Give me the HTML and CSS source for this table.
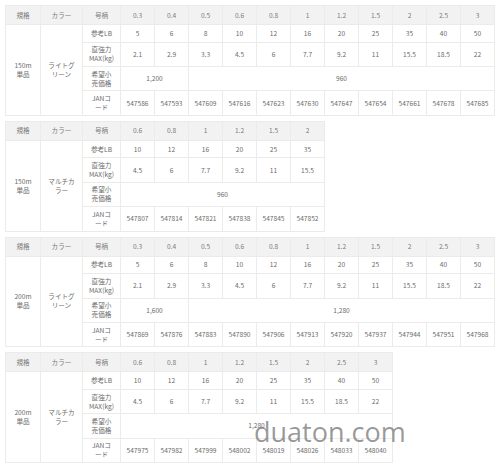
FILE: index.html
```html
<!DOCTYPE html>
<html lang="ja">
<head>
<meta charset="utf-8">
<link rel="stylesheet" href="styles.css">
</head>
<body>
<div class="page">
  <table class="spec w11">
    <colgroup><col class="c-spec"><col class="c-color"><col class="c-label"><col span="11" class="c-val"></colgroup>
    <tr class="head"><th>規格</th><th>カラー</th><th>号柄</th><th>0.3</th><th>0.4</th><th>0.5</th><th>0.6</th><th>0.8</th><th>1</th><th>1.2</th><th>1.5</th><th>2</th><th>2.5</th><th>3</th></tr>
    <tr class="r-lb"><td rowspan="4">150m<br>単品</td><td rowspan="4">ライトグ<br>リーン</td><td>参考LB</td><td>5</td><td>6</td><td>8</td><td>10</td><td>12</td><td>16</td><td>20</td><td>25</td><td>35</td><td>40</td><td>50</td></tr>
    <tr class="r-tall"><td>直強力<br>MAX(kg)</td><td>2.1</td><td>2.9</td><td>3.3</td><td>4.5</td><td>6</td><td>7.7</td><td>9.2</td><td>11</td><td>15.5</td><td>18.5</td><td>22</td></tr>
    <tr class="r-tall"><td>希望小<br>売価格</td><td colspan="2">1,200</td><td colspan="9">960</td></tr>
    <tr class="r-tall"><td>JANコ<br>ード</td><td>547586</td><td>547593</td><td>547609</td><td>547616</td><td>547623</td><td>547630</td><td>547647</td><td>547654</td><td>547661</td><td>547678</td><td>547685</td></tr>
  </table>

  <table class="spec w6">
    <colgroup><col class="c-spec"><col class="c-color"><col class="c-label"><col span="6" class="c-val"></colgroup>
    <tr class="head"><th>規格</th><th>カラー</th><th>号柄</th><th>0.6</th><th>0.8</th><th>1</th><th>1.2</th><th>1.5</th><th>2</th></tr>
    <tr class="r-lb"><td rowspan="4">150m<br>単品</td><td rowspan="4">マルチカ<br>ラー</td><td>参考LB</td><td>10</td><td>12</td><td>16</td><td>20</td><td>25</td><td>35</td></tr>
    <tr class="r-tall"><td>直強力<br>MAX(kg)</td><td>4.5</td><td>6</td><td>7.7</td><td>9.2</td><td>11</td><td>15.5</td></tr>
    <tr class="r-tall"><td>希望小<br>売価格</td><td colspan="6">960</td></tr>
    <tr class="r-tall"><td>JANコ<br>ード</td><td>547807</td><td>547814</td><td>547821</td><td>547838</td><td>547845</td><td>547852</td></tr>
  </table>

  <table class="spec w11">
    <colgroup><col class="c-spec"><col class="c-color"><col class="c-label"><col span="11" class="c-val"></colgroup>
    <tr class="head"><th>規格</th><th>カラー</th><th>号柄</th><th>0.3</th><th>0.4</th><th>0.5</th><th>0.6</th><th>0.8</th><th>1</th><th>1.2</th><th>1.5</th><th>2</th><th>2.5</th><th>3</th></tr>
    <tr class="r-lb"><td rowspan="4">200m<br>単品</td><td rowspan="4">ライトグ<br>リーン</td><td>参考LB</td><td>5</td><td>6</td><td>8</td><td>10</td><td>12</td><td>16</td><td>20</td><td>25</td><td>35</td><td>40</td><td>50</td></tr>
    <tr class="r-tall"><td>直強力<br>MAX(kg)</td><td>2.1</td><td>2.9</td><td>3.3</td><td>4.5</td><td>6</td><td>7.7</td><td>9.2</td><td>11</td><td>15.5</td><td>18.5</td><td>22</td></tr>
    <tr class="r-tall"><td>希望小<br>売価格</td><td colspan="2">1,600</td><td colspan="9">1,280</td></tr>
    <tr class="r-tall"><td>JANコ<br>ード</td><td>547869</td><td>547876</td><td>547883</td><td>547890</td><td>547906</td><td>547913</td><td>547920</td><td>547937</td><td>547944</td><td>547951</td><td>547968</td></tr>
  </table>

  <table class="spec w8">
    <colgroup><col class="c-spec"><col class="c-color"><col class="c-label"><col span="8" class="c-val"></colgroup>
    <tr class="head"><th>規格</th><th>カラー</th><th>号柄</th><th>0.6</th><th>0.8</th><th>1</th><th>1.2</th><th>1.5</th><th>2</th><th>2.5</th><th>3</th></tr>
    <tr class="r-lb"><td rowspan="4">200m<br>単品</td><td rowspan="4">マルチカ<br>ラー</td><td>参考LB</td><td>10</td><td>12</td><td>16</td><td>20</td><td>25</td><td>35</td><td>40</td><td>50</td></tr>
    <tr class="r-tall"><td>直強力<br>MAX(kg)</td><td>4.5</td><td>6</td><td>7.7</td><td>9.2</td><td>11</td><td>15.5</td><td>18.5</td><td>22</td></tr>
    <tr class="r-tall"><td>希望小<br>売価格</td><td colspan="8">1,280</td></tr>
    <tr class="r-tall"><td>JANコ<br>ード</td><td>547975</td><td>547982</td><td>547999</td><td>548002</td><td>548019</td><td>548026</td><td>548033</td><td>548040</td></tr>
  </table>
</div>
<div class="watermark">duaton.com</div>
</body>
</html>
```

FILE: styles.css
```css
html, body {
  margin: 0;
  padding: 0;
  background: #ffffff;
}

body {
  position: relative;
  width: 500px;
  height: 466px;
  overflow: hidden;
  font-family: "Noto Sans CJK JP", "Noto Sans", sans-serif;
  color: #6b6b6b;
}

.page {
  display: flex;
  flex-direction: column;
  align-items: flex-start;
  gap: 5px;
  padding: 5px 0 0 5px;
}

.spec {
  border-collapse: collapse;
  table-layout: fixed;
  font-size: 6.6px;
  line-height: 9px;
}

.spec.w11 { width: 488px; }
.spec.w6 { width: 319px; }
.spec.w8 { width: 387px; }

.c-spec { width: 35px; }
.c-color { width: 42px; }
.c-label { width: 38px; }
.c-val { width: 34px; }

.spec th,
.spec td {
  border: 1px solid #ebebeb;
  padding: 0;
  text-align: center;
  vertical-align: middle;
  font-weight: 400;
  white-space: nowrap;
  color: #6b6b6b;
}

.spec .head th {
  background: #f2f2f2;
  color: #7a7a7a;
  height: 18px;
}

.spec .r-lb td { height: 16.6px; }
.spec .r-tall td { height: 23.4px; }

.watermark {
  position: absolute;
  left: 254px;
  top: 414px;
  font-family: "Open Sans", "Liberation Sans", sans-serif;
  font-size: 27px;
  line-height: 36px;
  color: rgba(125, 125, 125, 0.78);
}
```
